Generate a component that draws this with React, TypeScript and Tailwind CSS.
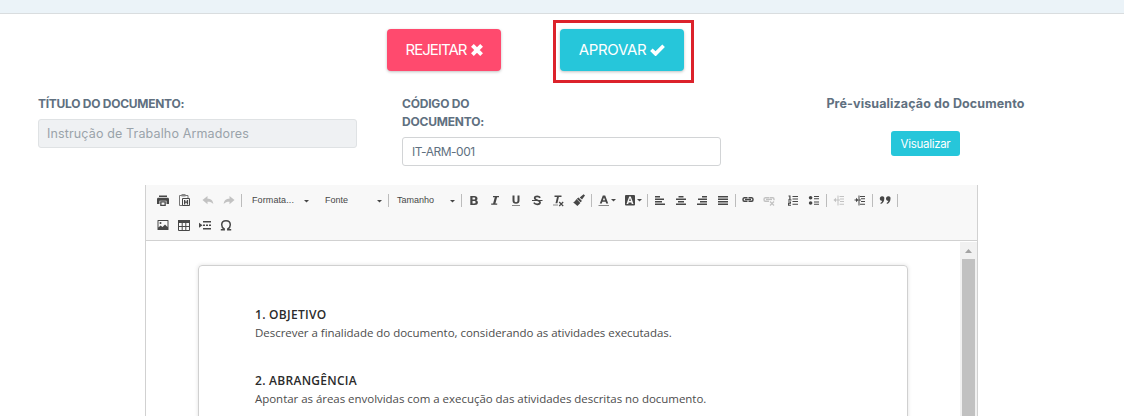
import React from 'react';

type IconProps = { children: React.ReactNode; className?: string };

function Tool({ children, className = '' }: IconProps) {
  return (
    <span className={`block h-4 w-[21px] shrink-0 pl-[3px] text-[#474747] ${className}`}>
      <svg width="16" height="16" viewBox="0 0 16 16" fill="currentColor">
        {children}
      </svg>
    </span>
  );
}

function Sep({ className = '' }: { className?: string }) {
  return <span className={`block h-[13px] w-px shrink-0 bg-[#bcbcbc] ${className}`} />;
}

function Caret({ className = '' }: { className?: string }) {
  return (
    <svg className={`shrink-0 ${className}`} width="5" height="3" viewBox="0 0 5 3" fill="#474747">
      <path d="M0 0h5L2.500 2.600z" />
    </svg>
  );
}

function Combo({ label, className, text }: { label: string; className: string; text: string }) {
  return (
    <span className={`flex h-4 shrink-0 items-center justify-between pr-[6px] ${className}`}>
      <span className={`whitespace-nowrap font-['Liberation_Sans',sans-serif] text-[9px] leading-4 text-[#474747] ${text}`}>{label}</span>
      <Caret className="mt-[2px]" />
    </span>
  );
}

function Toolbar() {
  return (
    <div className="h-[56px] border-b border-[#d1d1d1] bg-[#f8f8f8] pl-[6px] pt-[7px]">
      <div className="flex h-4 items-center">
        <Tool>
          <path d="M4 3.500h8V5H4zM3.400 5.700h9.200c.8 0 1.400.6 1.400 1.400V12h-2.500V8.700h-7V12H2V7.100c0-.8.6-1.400 1.400-1.400z" />
          <path d="M5.200 9.300h5.600V14H5.200zm1.300 1.200v2.200h3v-2.200z" fillRule="evenodd" />
        </Tool>
        <Tool>
          <path d="M3.500 3.500h8.500v10H3.500z" fill="none" stroke="#777" strokeWidth="1" />
          <path d="M5.500 2h4v2.500h-4z" fill="#888" />
          <path d="M6.500 6.500h7v7h-7z" fill="#f8f8f8" stroke="currentColor" />
          <path d="M8 8h1.300v1.500h1.500V8h1.300v4.500h-1.300v-1.700H9.300v1.700H8z" />
        </Tool>
        <Tool className="ml-[3px] !text-[#c2c2c2]">
          <path d="M7.500 4v2.700c3.500.1 5.500 1.500 5.800 5.300-1.500-1.800-3-2.300-5.800-2.300v2.500L2.500 8z" />
        </Tool>
        <Tool className="!text-[#c2c2c2]">
          <path d="M8.500 4v2.700c-3.500.1-5.500 1.500-5.800 5.300 1.500-1.800 3-2.300 5.800-2.300v2.500L13.500 8z" />
        </Tool>
        <Sep className="ml-[2px]" />
        <Combo label="Formata..." className="w-[73px] pl-[10px]" text="tracking-[0.1px]" />
        <Combo label="Fonte" className="w-[73px] pl-[10px]" text="" />
        <Sep />
        <Combo label="Tamanho" className="w-[72px] pl-[8px]" text="" />
        <Sep />
        <Tool className="ml-px">
          <path fillRule="evenodd" d="M4.300 4h4.200c1.800 0 3 .9 3 2.400 0 1-.5 1.600-1.300 1.900 1 .3 1.700 1 1.700 2.200 0 1.700-1.300 2.500-3.200 2.500H4.300zm2.200 1.600v2h1.600c.7 0 1.100-.3 1.100-1s-.4-1-1.100-1zm0 3.500v2.300h1.800c.8 0 1.300-.4 1.300-1.200 0-.7-.5-1.100-1.300-1.100z" />
        </Tool>
        <Tool>
          <path d="M6 4h6v1.300h-1.900l-1.700 6.200h1.800v1.300h-6v-1.300h1.900l1.700-6.200H6z" />
        </Tool>
        <Tool>
          <path d="M4.500 3.500h2v5c0 1.200.5 1.700 1.500 1.700s1.500-.5 1.500-1.700v-5h2v5c0 2.200-1.300 3.300-3.500 3.300s-3.500-1.100-3.500-3.300z" />
          <path d="M4 13h8v1H4z" fill="#888" />
        </Tool>
        <Tool>
          <path d="M11.200 5.700c-.7-1-1.700-1.400-3-1.400-1.500 0-2.500.6-2.500 1.700 0 2.700 5.400 1.700 5.400 4.300 0 1.200-1.100 2-2.800 2-1.500 0-2.700-.5-3.500-1.700" fill="none" stroke="currentColor" strokeWidth="1.700" />
          <path d="M3 8h10.500v1H3z" />
        </Tool>
        <Tool>
          <path d="M4.500 3.500h7v1.400H8.900l-1.500 6.300H5.500L7 4.900H4.500z" />
          <path d="M3 12.500h5v1H3z" fill="#888" />
          <path d="M9.200 10l4 4M13.200 10l-4 4" stroke="currentColor" strokeWidth="1.200" />
        </Tool>
        <Tool>
          <path d="M12.600 2.300l1.400 1.300-3 4-2.300-2.200zM7.500 5.500l3.500 3.500-1.500 1.300-3.700-3.600zM5.500 7l3.900 3.900-3 3L2.100 10.300c1.300 0 2.200-1.600 3.400-3.300z" />
        </Tool>
        <Sep className="ml-[2px]" />
        <span className="ml-px flex w-[26px] shrink-0 items-center">
          <Tool className="!w-[19px]">
            <path fillRule="evenodd" d="M6.800 3.500h2.400l3 8h-2l-.6-1.700H6.400l-.6 1.700h-2zM8 5.400L6.900 8.300h2.200z" />
            <path d="M2.500 13h10.500v1H2.500z" fill="#888" />
          </Tool>
          <Caret className="-ml-px mt-px" />
        </span>
        <span className="flex w-[27px] shrink-0 items-center">
          <Tool className="!w-[19px]">
            <path fillRule="evenodd" d="M4 3h8a1 1 0 0 1 1 1v8.500a1 1 0 0 1-1 1H4a1 1 0 0 1-1-1V4a1 1 0 0 1 1-1zm3.200 1.500L4.500 12h1.700l.5-1.500h2.600l.5 1.500h1.700L8.800 4.500zM8 6l.9 3H7.100z" />
          </Tool>
          <Caret className="-ml-px mt-px" />
        </span>
        <Sep className="ml-px" />
        <Tool className="ml-px"><path d="M3 4h5v1.500H3zM3 6.500h9V8H3zM3 9h7v1.500H3zM3 11.500h10V13H3z" /></Tool>
        <Tool><path d="M5.500 4h5v1.500h-5zM3 6.500h10V8H3zM5 9h6v1.500H5zM3 11.500h10V13H3z" /></Tool>
        <Tool><path d="M8 4h5v1.500H8zM4 6.500h9V8H4zM6 9h7v1.500H6zM3 11.500h10V13H3z" /></Tool>
        <Tool><path d="M3 4h10v1.500H3zM3 6.500h10V8H3zM3 9h10v1.500H3zM3 11.500h10V13H3z" /></Tool>
        <Sep className="ml-[2px]" />
        <Tool className="ml-px">
          <path d="M7.500 5.700H4.200C3.200 5.700 3 6.300 3 7.500s.2 1.800 1.200 1.800h3.300M8.500 5.700h3.300c1 0 1.200.6 1.200 1.800s-.2 1.800-1.200 1.800H8.500" fill="none" stroke="currentColor" strokeWidth="1.500" />
          <path d="M5 6.800h6v1.400H5z" />
        </Tool>
        <Tool className="!text-[#c2c2c2]">
          <path d="M8 5.700H4.200C3.200 5.700 3 6.300 3 7.500s.2 1.800 1.200 1.800H8M8.500 5.700h3.300c1 0 1.200.6 1.200 1.700v.8" fill="none" stroke="currentColor" strokeWidth="1.400" />
          <path d="M5 6.800h6v1.300H5z" />
          <path d="M9 9.500l4 4M13 9.500l-4 4" stroke="currentColor" strokeWidth="1.200" />
        </Tool>
        <Tool className="ml-[3px]">
          <path d="M3.500 3.500h2v4h1v1H3v-1h1.300v-3h-.8zM3 9.500h3v2.300H4.200v.9H6v1H3v-2.800h1.800v-.5H3zM7.500 4H13v1H7.500zM7.500 6.500H13v1H7.500zM7.500 9H13v1H7.500zM7.500 11.700H13v1H7.500z" />
        </Tool>
        <Tool>
          <circle cx="4.600" cy="5.700" r="1.800" /><circle cx="4.600" cy="11" r="1.800" />
          <path d="M8 4h5v1H8zM8 6.300h5v1H8zM8 9.500h5v1H8zM8 11.800h5v1H8z" />
        </Tool>
        <Sep className="ml-[2px]" />
        <Tool className="ml-px !text-[#c2c2c2]">
          <path d="M6.500 3.500h1v10h-1zM2.500 8L5 5.700v1.800h4v1H5v1.800zM8.500 4H13v1H8.500zM9 6.500h4v1H9zM9 9h4v1H9zM8.500 11.700H13v1H8.500z" />
        </Tool>
        <Tool>
          <path d="M6.500 3.500h1v10h-1zM6.500 8L4 5.700v1.800H2.500v1H4v1.800zM8 4h5v1H8zM9 6.300h4v1H9zM7.500 7.500H9v1H7.500zM9 9h4v1H9zM8 11.700h5v1H8z" />
        </Tool>
        <Sep className="ml-[2px]" />
        <Tool className="ml-px">
          <path d="M5 4.200a2.200 2.200 0 0 1 2.300 2.500C7.300 9.200 6 11.200 3.800 11.900l-.4-.8c1-.5 1.600-1.300 1.700-2.300C3.600 8.800 2.800 7.900 2.800 6.500 2.800 5.200 3.700 4.200 5 4.200zM11.200 4.200a2.200 2.200 0 0 1 2.300 2.500c0 2.500-1.300 4.500-3.500 5.200l-.4-.8c1-.5 1.600-1.300 1.700-2.300C9.800 8.800 9 7.900 9 6.500c0-1.300.9-2.300 2.200-2.300z" />
        </Tool>
        <Sep className="ml-[2px]" />
      </div>
      <div className="mt-[9px] flex h-4 items-center">
        <Tool>
          <path fillRule="evenodd" d="M3 3h10a.5.500 0 0 1 .5.500v9a.5.500 0 0 1-.5.500H3a.5.500 0 0 1-.5-.5v-9A.5.500 0 0 1 3 3zm.5 1v6.500l2-2 2 1.500L10 7.500l2.500 2.500V4z" />
          <circle cx="5.500" cy="6" r="1" />
        </Tool>
        <Tool>
          <path d="M2 3h12v3H2z" />
          <path d="M2.500 5.500h11v8h-11zM2.500 9.500h11M6.200 5.500v8M9.800 5.500v8" fill="none" stroke="currentColor" />
        </Tool>
        <Tool>
          <path d="M2 5.700L5.500 8.200 2 10.700zM6 4h8v1.500H6zM6 7.500h2v1.400H6zM9 7.500h2v1.400H9zM12 7.500h2v1.400h-2zM6 11h8v1.500H6z" />
        </Tool>
        <Tool>
          <path d="M2.800 12.800h3.400V12C4.500 11 3.700 9.500 3.700 7.800 3.700 5.200 5.500 3.700 8 3.700s4.300 1.500 4.300 4.100c0 1.700-.8 3.200-2.500 4.200v.8h3.400" fill="none" stroke="currentColor" strokeWidth="1.500" />
        </Tool>
      </div>
    </div>
  );
}

function Section({ title, text }: { title: string; text: string }) {
  return (
    <section className="mb-[30px] font-['Open_Sans','Noto_Sans',sans-serif] text-[11.5px] leading-[18px]">
      <h2 className="whitespace-nowrap text-[12px] font-semibold leading-[18px] tracking-[0.28px] text-[#2b2b2b]">{title}</h2>
      <p className="whitespace-nowrap tracking-[-0.035px] text-[#4d4d4d]">{text}</p>
    </section>
  );
}

export default function App() {
  return (
    <div className="h-[416px] overflow-hidden bg-white font-['Inter',sans-serif] text-[#607080]">
      <div className="h-[14px] border-b border-[#d9dddf] bg-[#ebf3f8]" />

      <div className="flex items-start pl-[387px] pt-[6px]">
        <button className="mt-[9px] flex h-[42px] w-[114px] items-center justify-center gap-[4px] rounded-[4px] bg-[#ff4a6e] text-[15px] text-white shadow-[0_1px_3px_rgba(0,0,0,0.25)]">
          <span className="tracking-[-0.95px]">REJEITAR</span>
          <svg width="12" height="12" viewBox="0 0 11 11" fill="none" stroke="currentColor" strokeWidth="3.600">
            <path d="M1.300 1.300l8.400 8.400M9.700 1.300L1.300 9.700" />
          </svg>
        </button>
        <div className="ml-[52px] h-[63px] w-[141px] border-[3px] border-[#dc222b] pl-[4px] pt-[6px]">
          <button className="flex h-[42px] w-[124px] items-center justify-center gap-[4px] rounded-[4px] bg-[#26c6da] text-[15px] text-white shadow-[0_1px_3px_rgba(0,0,0,0.25)]">
            <span className="tracking-[-0.35px]">APROVAR</span>
            <svg width="15" height="12" viewBox="0 0 14 11" fill="none" stroke="currentColor" strokeWidth="3.400">
              <path d="M1.300 5.300l3.900 3.800L12.700 1.500" />
            </svg>
          </button>
        </div>
      </div>

      <div className="flex h-[102px] items-start pl-[38px] pt-[12px] text-[12px] leading-[18px]">
        <div className="w-[319px]">
          <label className="block whitespace-nowrap font-bold tracking-[-0.27px]">TÍTULO DO DOCUMENTO:</label>
          <div className="mt-[6px] flex h-[29px] items-center rounded-[3px] border border-[#dfe2e4] bg-[#eff1f3] pl-[8px] text-[12.5px] tracking-[0.14px] text-[#9aa3aa]">Instrução de Trabalho Armadores</div>
        </div>
        <div className="ml-[45px] w-[319px]">
          <label className="block font-bold tracking-[-0.2px]">CÓDIGO DO<br />DOCUMENTO:</label>
          <div className="mt-[6px] flex h-[29px] items-center rounded-[3px] border border-[#d2d4d6] bg-white pl-[9px] tracking-[-0.5px]">IT-ARM-001</div>
        </div>
        <div className="ml-[86px] flex w-[237px] flex-col items-center">
          <p className="whitespace-nowrap text-[12.5px] font-bold tracking-[0.12px]">Pré-visualização do Documento</p>
          <button className="mt-[18px] h-[25px] w-[69px] rounded-[3px] bg-[#26c6da] text-[11.5px] tracking-[-0.3px] text-white">Visualizar</button>
        </div>
      </div>

      <div className="ml-[145px] h-[231px] w-[833px] border-x border-[#d1d1d1]">
        <Toolbar />
        <div className="flex h-[175px] justify-between pt-px">
          <div className="ml-[52px] mt-[23px] h-[200px] w-[710px] rounded-t-[4px] border border-[#d0d0d0] pl-[56px] pt-[40px] shadow-[0_0_4px_rgba(0,0,0,0.12)]">
            <Section title="1. OBJETIVO" text="Descrever a finalidade do documento, considerando as atividades executadas." />
            <Section title="2. ABRANGÊNCIA" text="Apontar as áreas envolvidas com a execução das atividades descritas no documento." />
          </div>
          <div className="flex w-[17px] flex-col items-center bg-[#f1f1f1]">
            <svg className="mt-[7px] shrink-0" width="7" height="4" viewBox="0 0 7 4" fill="#a3a3a3"><path d="M0 4L3.500 0 7 4z" /></svg>
            <div className="mt-[6px] w-[13px] grow bg-[#c1c1c1]" />
          </div>
        </div>
      </div>
    </div>
  );
}
